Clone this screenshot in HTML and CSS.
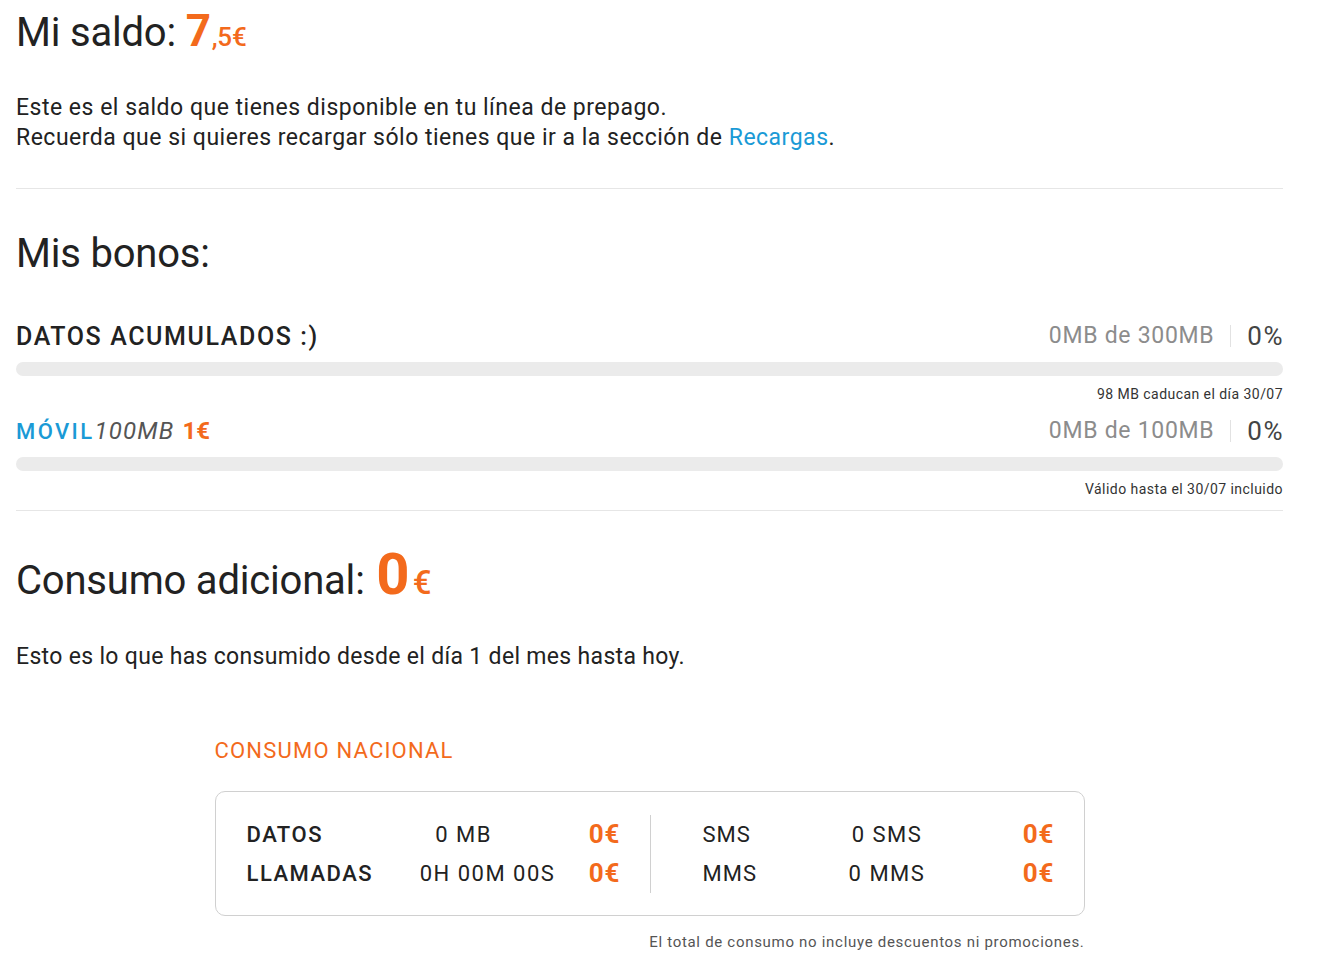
FILE: index.html
```html
<!DOCTYPE html>
<html lang="es">
<head>
<meta charset="utf-8">
<title>Mi saldo</title>
<link rel="stylesheet" href="styles.css">
</head>
<body>
<main class="page">
  <section class="block">
    <h1 class="title title-saldo">Mi saldo: <span class="amount"><span class="amount-int">7</span><span class="amount-dec">,5€</span></span></h1>
    <p class="lead">Este es el saldo que tienes disponible en tu línea de prepago.<br>Recuerda que si quieres recargar sólo tienes que ir a la sección de <a class="link" href="#">Recargas</a>.</p>
  </section>

  <hr class="divider">

  <section class="block">
    <h2 class="title title-bonos">Mis bonos:</h2>

    <div class="bono">
      <div class="bono-head">
        <span class="bono-name">DATOS ACUMULADOS :)</span>
        <span class="bono-usage"><span class="bono-mb">0MB de 300MB</span><span class="bono-pct">0%</span></span>
      </div>
      <div class="bar"><div class="bar-fill" style="width:0%"></div></div>
      <p class="bono-note">98 MB caducan el día 30/07</p>
    </div>

    <div class="bono bono-second">
      <div class="bono-head">
        <span class="bono-name bono-name-plan"><span class="plan-brand">MÓVIL</span><span class="plan-size">100MB</span> <span class="plan-price">1€</span></span>
        <span class="bono-usage"><span class="bono-mb">0MB de 100MB</span><span class="bono-pct">0%</span></span>
      </div>
      <div class="bar"><div class="bar-fill" style="width:0%"></div></div>
      <p class="bono-note">Válido hasta el 30/07 incluido</p>
    </div>
  </section>

  <hr class="divider divider-tight">

  <section class="block">
    <h2 class="title title-consumo">Consumo adicional: <span class="amount"><span class="amount-zero">0</span><span class="amount-eur">€</span></span></h2>
    <p class="lead lead-consumo">Esto es lo que has consumido desde el día 1 del mes hasta hoy.</p>

    <div class="nacional">
      <h3 class="nacional-title">CONSUMO NACIONAL</h3>
      <div class="usage-box">
        <div class="usage-half usage-left">
          <span class="u-label">DATOS</span><span class="u-value u-value-datos">0 MB</span><span class="u-price">0€</span>
          <span class="u-label">LLAMADAS</span><span class="u-value">0H 00M 00S</span><span class="u-price">0€</span>
        </div>
        <div class="usage-sep"></div>
        <div class="usage-half usage-right">
          <span class="u-label u-label-light">SMS</span><span class="u-value">0 SMS</span><span class="u-price">0€</span>
          <span class="u-label u-label-light">MMS</span><span class="u-value">0 MMS</span><span class="u-price">0€</span>
        </div>
      </div>
      <p class="nacional-note">El total de consumo no incluye descuentos ni promociones.</p>
    </div>
  </section>
</main>
</body>
</html>
```

FILE: styles.css
```css
* {
  box-sizing: border-box;
}

html, body {
  margin: 0;
  padding: 0;
  background: #ffffff;
}

body {
  font-family: Roboto, "Liberation Sans", sans-serif;
  color: #222222;
  -webkit-font-smoothing: antialiased;
}

.page {
  width: 1267px;
  margin-left: 16px;
}

.block {
  display: block;
}

/* headings */
.title {
  margin: 0;
  font-size: 40px;
  line-height: 52px;
  font-weight: 400;
  color: #222222;
  letter-spacing: -0.2px;
}

.title-saldo {
  padding-top: 5px;
}

.title-bonos {
  margin-top: 39px;
}

.title-consumo {
  margin-top: 37px;
}

.amount {
  color: #f36a1c;
}

.amount-int {
  font-weight: 700;
  font-size: 44px;
}

.amount-dec {
  font-size: 26px;
  font-weight: 500;
  margin-left: 1px;
}

.amount-zero {
  font-weight: 700;
  font-size: 58px;
  letter-spacing: 2px;
  margin-left: 2px;
}

.amount-eur {
  font-size: 33px;
  font-weight: 500;
  margin-left: 1px;
}

/* paragraphs */
.lead {
  margin: 30px 0 0;
  font-size: 23px;
  line-height: 30px;
  color: #222222;
  letter-spacing: 0.5px;
}

.lead-consumo {
  margin-top: 33px;
  letter-spacing: 0.32px;
}

.link {
  color: #1a9ad6;
  text-decoration: none;
}

.divider {
  border: 0;
  height: 1px;
  background: #e6e6e6;
  margin: 35px 0 0;
}

.divider-tight {
  margin-top: 11px;
}

/* bonos */
.bono {
  margin-top: 40px;
}

.bono-second {
  margin-top: 11px;
}

.bono-head {
  display: flex;
  align-items: center;
  justify-content: space-between;
  height: 32px;
}

.bono-name {
  font-size: 25px;
  font-weight: 500;
  letter-spacing: 1.6px;
  color: #222222;
}

.bono-name-plan {
  font-size: 22px;
  letter-spacing: 2.4px;
}

.plan-brand {
  color: #1a9ad6;
  font-weight: 500;
}

.plan-size {
  color: #555555;
  font-style: italic;
  font-weight: 400;
  font-size: 24px;
  letter-spacing: 1.2px;
}

.plan-price {
  color: #f36a1c;
  font-weight: 700;
  font-size: 24px;
  letter-spacing: 0;
}

.bono-usage {
  display: flex;
  align-items: center;
  font-size: 23px;
}

.bono-mb {
  color: #8c8c8c;
  padding-right: 16px;
  border-right: 1px solid #e2e2e2;
  line-height: 22px;
  letter-spacing: 0.7px;
}

.bono-pct {
  color: #444444;
  padding-left: 16px;
  font-size: 26px;
  letter-spacing: 1.5px;
  margin-right: -1px;
}

.bar {
  margin-top: 10px;
  height: 14px;
  border-radius: 7px;
  background: #ebebeb;
  overflow: hidden;
}

.bar-fill {
  height: 100%;
  background: #f36a1c;
}

.bono-note {
  margin: 8px 0 0;
  font-size: 14px;
  line-height: 20px;
  text-align: right;
  color: #333333;
  letter-spacing: 0.45px;
}

/* consumo nacional */
.nacional {
  width: 870px;
  margin: 64px auto 0;
}

.nacional-title {
  margin: 0;
  font-size: 22px;
  line-height: 30px;
  font-weight: 400;
  color: #f36a1c;
  letter-spacing: 1.2px;
}

.usage-box {
  margin-top: 25px;
  height: 125px;
  border: 1px solid #d0d0d0;
  border-radius: 10px;
  display: flex;
  align-items: center;
}

.usage-half {
  display: grid;
  grid-template-rows: 39px 39px;
  align-items: center;
  font-size: 22px;
  color: #222222;
}

.usage-left {
  width: 434px;
  grid-template-columns: 150px 1fr 41px;
  padding: 0 30px 0 31px;
}

.usage-right {
  flex: 1;
  grid-template-columns: 59px 1fr 41px;
  padding: 0 30px 0 52px;
}

.usage-sep {
  width: 1px;
  height: 78px;
  background: #d0d0d0;
}

.u-label {
  font-weight: 500;
  letter-spacing: 1.5px;
}

.u-label-light {
  font-weight: 400;
  letter-spacing: 1px;
}

.u-value {
  text-align: center;
  letter-spacing: 1.5px;
}

.u-value-datos {
  padding-right: 48px;
}

.u-price {
  text-align: right;
  color: #f36a1c;
  font-weight: 700;
  font-size: 26px;
  letter-spacing: 1px;
  margin-right: -1px;
}

.nacional-note {
  margin: 16px 0 0;
  font-size: 15px;
  line-height: 20px;
  text-align: right;
  color: #555555;
  letter-spacing: 0.7px;
}
```
